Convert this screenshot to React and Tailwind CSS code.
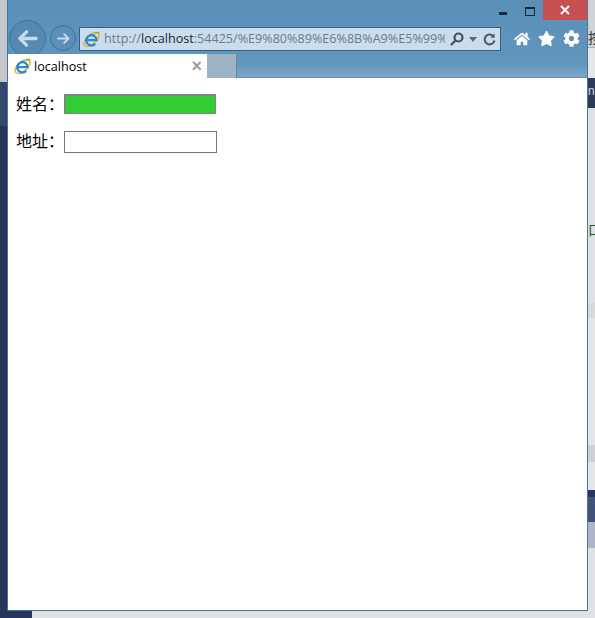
import { FaHome, FaStar, FaCog } from 'react-icons/fa';

const IeLogo = ({ size = 18 }) => (
  <svg width={size} height={size} viewBox="0 0 18 18" fill="none">
    <ellipse cx="9" cy="9" rx="9.6" ry="4.8" transform="rotate(-42 9 9)" stroke="#e9b52c" strokeWidth="1.7" />
    <path d="M3.9 9.7H14.4A5.5 5.5 0 1 0 12.9 13.6" stroke="#2a8ad4" strokeWidth="2.5" />
    <path d="M13 2.4c1.6-.9 3.2-1.2 3.9-.5" stroke="#7fb648" strokeWidth="1.5" strokeLinecap="round" />
  </svg>
);

const NavArrow = ({ size, thick, flip }) => (
  <svg width={size} height={size} viewBox="0 0 24 24" fill="none" stroke="#c8dae8" strokeWidth={thick} strokeLinecap="round" strokeLinejoin="round" className={flip ? 'rotate-180' : ''}>
    <path d="M21 12H4M11 5l-7 7 7 7" />
  </svg>
);

const Field = ({ label, labelClass, className }) => (
  <div className="flex items-center">
    <label className={labelClass}>{label}</label>
    <input className={className} readOnly />
  </div>
);

const App = () => {
  return (
    <div className="flex h-[618px] w-[595px] flex-col overflow-hidden bg-[#dfe1e4] font-['Liberation_Sans','Noto_Sans_CJK_SC',sans-serif]">
      <div className="flex h-[611px]">
        {/* what shows left of the browser */}
        <div className="flex w-[7px] flex-col">
          <div className="h-[82px] bg-[#c4c8cd]" />
          <div className="h-[44px] bg-[#33486e]" />
          <div className="flex-1 bg-[#27375c]" />
        </div>

        <div className="flex w-[581px] flex-col border-x border-b border-[#4a7595] bg-white">
          <header className="h-[78px] border-b border-[#6d8ea8] bg-gradient-to-b from-[#5a8fb8] via-[#6095bc] via-80% to-[#7ba7c8]">
            <div className="flex h-[27px] items-start justify-end">
              <div className="mt-[12px] mr-[18px] h-[3px] w-[8px] bg-[#16293c]" />
              <div className="mt-[7px] mr-[8px] h-[9px] w-[10px] border border-t-2 border-[#16293c]" />
              <div className="flex h-[20px] w-[44px] items-center justify-center bg-[#c75050]">
                <svg width="12" height="12" viewBox="0 0 12 12" stroke="#fff" strokeWidth="2">
                  <path d="M2 2l8 8M10 2l-8 8" />
                </svg>
              </div>
            </div>

            <div className="flex h-[27px] items-start">
              <div className="mt-[-7px] ml-[1px] flex h-[37px] w-[37px] items-center justify-center rounded-full border border-[#3f7299] bg-[#5589b2]">
                <NavArrow size={23} thick={3.4} />
              </div>
              <div className="mt-[-2px] ml-[4px] flex h-[26px] w-[26px] items-center justify-center rounded-full border border-[#3f7299] bg-[#5a8fb8]">
                <NavArrow size={15} thick={3} flip />
              </div>
              <div className="ml-[3px] flex h-[24px] w-[422px] items-center border border-[#37607f] bg-[#cbdded] pl-[3px] pr-[3px]">
                <IeLogo size={17} />
                <div className="ml-[4px] w-[341px] overflow-hidden whitespace-nowrap font-['Open_Sans',sans-serif] text-[12.6px] leading-[20px] text-[#6a7c8a]">
                  http://<span className="text-[#1b2530]">localhost</span>:54425/%E9%80%89%E6%8B%A9%E5%99%
                </div>
                <svg width="14" height="14" viewBox="0 0 14 14" fill="none" stroke="#44515c" strokeWidth="2.2" className="ml-[5px]">
                  <circle cx="8.5" cy="5.5" r="4" />
                  <path d="M5.5 8.5L1.5 12.5" strokeLinecap="round" />
                </svg>
                <svg width="8" height="5" viewBox="0 0 8 5" className="ml-[5px]" fill="#5a6a77">
                  <path d="M0 0h8L4 5z" />
                </svg>
                <svg width="13" height="13" viewBox="0 0 14 14" fill="none" stroke="#4d5a65" strokeWidth="2.2" className="ml-[6px]">
                  <path d="M11.5 4A5.3 5.3 0 1 0 12.3 8" />
                  <path d="M12.5 0.5V5H8z" fill="#4d5a65" stroke="none" />
                </svg>
              </div>
              <div className="ml-[13px] flex items-center gap-[8px] pt-[3px] text-white">
                <FaHome size={16} />
                <FaStar size={17} />
                <FaCog size={17} />
              </div>
            </div>

            <div className="flex h-[24px] items-stretch">
              <div className="flex w-[199px] items-center bg-white pl-[6px] pr-[5px]">
                <IeLogo size={17} />
                <span className="ml-[3px] flex-1 translate-y-[1px] font-['Open_Sans',sans-serif] text-[12.6px] leading-none text-black">localhost</span>
                <span className="text-[18px] font-bold leading-none text-[#9d9d9d]">×</span>
              </div>
              <div className="w-[30px] border-r border-[#5f86a4] bg-[#9cb3c6]" />
            </div>
          </header>

          <main className="flex flex-col gap-[17px] pl-[8px] pt-[16px]">
            <Field
              label="姓名："
              labelClass="w-[48px] translate-y-[1px] text-[16px] leading-[20px] text-black"
              className="h-[20px] w-[152px] border-t-2 border-r border-b border-l-2 border-[#7a8a7a] bg-[#32cd32] outline-none"
            />
            <Field
              label="地址："
              labelClass="w-[48px] text-[16px] leading-[20px] text-black"
              className="h-[22px] w-[153px] border border-[#767676] bg-white outline-none"
            />
          </main>
        </div>

        {/* what shows right of the browser */}
        <div className="flex w-[7px] flex-col overflow-hidden text-[14px] leading-[16px] whitespace-nowrap">
          <div className="h-[47px] bg-[#cfd2d6] pt-[30px] text-[#333]">按</div>
          <div className="h-[31px] border-t border-[#aab0b6] bg-[#e6e7e9]" />
          <div className="h-[30px] bg-[#2c3a5a] pt-[5px] text-[12px] text-[#d5dbe6]">n-</div>
          <div className="h-[195px] bg-[#dfe1e4] pt-[114px] text-[#1c5c1c]">口</div>
          <div className="h-[15px] bg-[#d9dadc]" />
          <div className="h-[127px] bg-[#e4e5e7]" />
          <div className="h-[17px] bg-[#cfd0d3]" />
          <div className="h-[28px] bg-[#e4e5e7]" />
          <div className="h-[7px] bg-[#27375c]" />
          <div className="h-[25px] bg-[#3f5478]" />
          <div className="h-[26px] bg-[#aeb5c8]" />
          <div className="flex-1 bg-[#e0e1e4]" />
        </div>
      </div>

      <div className="flex h-[7px]">
        <div className="w-[32px] bg-[#27375c]" />
        <div className="flex-1 bg-[#dfe1e4]" />
      </div>
    </div>
  );
};

export default App;
